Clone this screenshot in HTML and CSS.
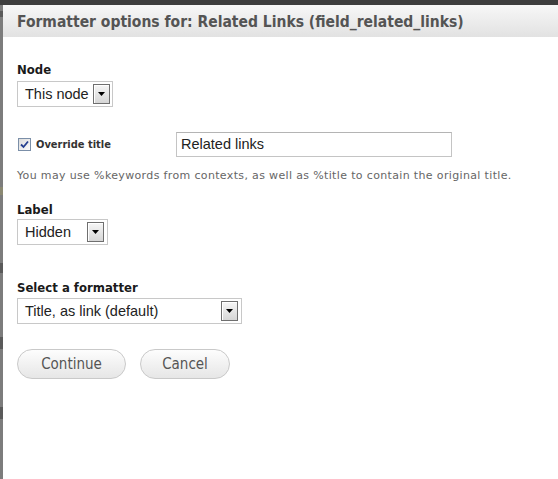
FILE: index.html
```html
<!DOCTYPE html>
<html>
<head>
<meta charset="utf-8">
<link rel="stylesheet" href="styles.css">
</head>
<body>
<div class="topbar"></div>
<div class="main">
  <div class="strip">
    <span class="mark m1"></span>
    <span class="mark m2"></span>
    <span class="mark m3"></span>
    <span class="mark m4"></span>
    <span class="mark m5"></span>
  </div>
  <div class="dialog">
    <div class="titlebar">
      <h1 class="title">Formatter options for: Related Links (field_related_links)</h1>
    </div>
    <div class="content">
      <div class="field field-node">
        <div class="flabel">Node</div>
        <div class="sel sel-node">
          <span class="sel-text">This node</span>
          <span class="sel-btn"><svg width="7" height="4" viewBox="0 0 7 4"><path d="M0 0H7L3.5 4Z" fill="#000"/></svg></span>
        </div>
      </div>

      <div class="override">
        <div class="check-wrap">
          <span class="checkbox"><svg width="9" height="9" viewBox="0 0 9 9"><path d="M1 4.5L3.5 7L8 1.5" fill="none" stroke="#253f8f" stroke-width="1.8"/></svg></span>
          <span class="check-label">Override title</span>
        </div>
        <div class="textbox">Related links</div>
      </div>
      <div class="help">You may use %keywords from contexts, as well as %title to contain the original title.</div>

      <div class="field field-label">
        <div class="flabel">Label</div>
        <div class="sel sel-label">
          <span class="sel-text">Hidden</span>
          <span class="sel-btn"><svg width="7" height="4" viewBox="0 0 7 4"><path d="M0 0H7L3.5 4Z" fill="#000"/></svg></span>
        </div>
      </div>

      <div class="field field-formatter">
        <div class="flabel">Select a formatter</div>
        <div class="sel sel-formatter">
          <span class="sel-text">Title, as link (default)</span>
          <span class="sel-btn"><svg width="7" height="4" viewBox="0 0 7 4"><path d="M0 0H7L3.5 4Z" fill="#000"/></svg></span>
        </div>
      </div>

      <div class="buttons">
        <button class="btn btn-continue">Continue</button>
        <button class="btn btn-cancel">Cancel</button>
      </div>
    </div>
  </div>
</div>
</body>
</html>
```
FILE: styles.css
```css
* { box-sizing: border-box; }
html, body {
  margin: 0;
  padding: 0;
  width: 558px;
  height: 479px;
  overflow: hidden;
  background: #fff;
}
body {
  font-family: "DejaVu Sans Condensed", "DejaVu Sans", sans-serif;
}
.topbar {
  height: 5px;
  background: #3d3d3d;
}
.main {
  display: flex;
  height: 474px;
}
.strip {
  width: 3px;
  background: #7c7c7c;
  display: flex;
  flex-direction: column;
}
.mark {
  display: block;
  width: 3px;
  background: #5a5a5a;
}
.m1 { height: 6px; margin-top: 6px; }
.m2 { height: 8px; margin-top: 170px; background: #8a8872; }
.m3 { height: 10px; margin-top: 68px; }
.m4 { height: 12px; margin-top: 64px; }
.m5 { height: 12px; margin-top: 58px; }
.dialog {
  flex: 1;
  background: #fff;
}
.titlebar {
  height: 32px;
  background: linear-gradient(#f7f7f7, #e2e2e2);
  padding: 2px 0 0 14px;
}
.title {
  margin: 0;
  font-size: 15.5px;
  line-height: 30px;
  font-weight: bold;
  color: #545454;
}
.content {
  padding: 25px 0 0 14px;
}
.flabel {
  font-size: 13px;
  line-height: 16px;
  font-weight: bold;
  color: #1a1a1a;
}
.sel {
  display: flex;
  align-items: center;
  justify-content: space-between;
  height: 26px;
  border: 1px solid #c8c8c8;
  background: #fff;
  padding: 0 3px 0 7px;
  margin-top: 3px;
}
.sel-text {
  font-family: "Liberation Sans", Arial, sans-serif;
  font-size: 14.5px;
  color: #222;
}
.sel-btn {
  width: 17px;
  height: 20px;
  border: 1px solid #6f6f6f;
  background: linear-gradient(#f6f6f6, #d6d6d6);
  box-shadow: inset 1px 1px 0 #fff;
  display: flex;
  align-items: center;
  justify-content: center;
  flex: none;
}
.sel-node { width: 96px; padding-right: 2px; }
.sel-label { width: 91px; margin-top: 1px; }
.sel-formatter { width: 225px; margin-top: 2px; }
.field-label { margin-top: 19px; }
.field-formatter { margin-top: 35px; }

.override {
  display: flex;
  align-items: center;
  margin-top: 25px;
}
.check-wrap {
  width: 159px;
  display: flex;
  align-items: center;
  padding-left: 1px;
}
.checkbox {
  width: 13px;
  height: 13px;
  border: 1px solid #7b8fa8;
  background: linear-gradient(135deg, #dcdcdc, #fbfbfb);
  display: flex;
  align-items: center;
  justify-content: center;
}
.check-label {
  margin-left: 5px;
  font-size: 11px;
  font-weight: bold;
  color: #333;
}
.textbox {
  width: 276px;
  height: 25px;
  border: 1px solid #c4c4c4;
  border-top-color: #b4b4b4;
  padding-left: 4px;
  font-family: "Liberation Sans", Arial, sans-serif;
  font-size: 14.5px;
  line-height: 23px;
  color: #222;
}
.help {
  margin-top: 12px;
  font-family: "DejaVu Sans", sans-serif;
  font-size: 11px;
  letter-spacing: 0.35px;
  line-height: 14px;
  color: #666;
}
.buttons {
  display: flex;
  gap: 14px;
  margin-top: 25px;
}
.btn {
  height: 30px;
  border: 1px solid #c9c9c9;
  border-radius: 15px;
  background: linear-gradient(#fdfdfd, #e6e6e6);
  color: #555;
  font-family: "DejaVu Sans Condensed", "DejaVu Sans", sans-serif;
  font-size: 15px;
  padding: 0;
}
.btn-continue { width: 109px; }
.btn-cancel { width: 90px; }
```
